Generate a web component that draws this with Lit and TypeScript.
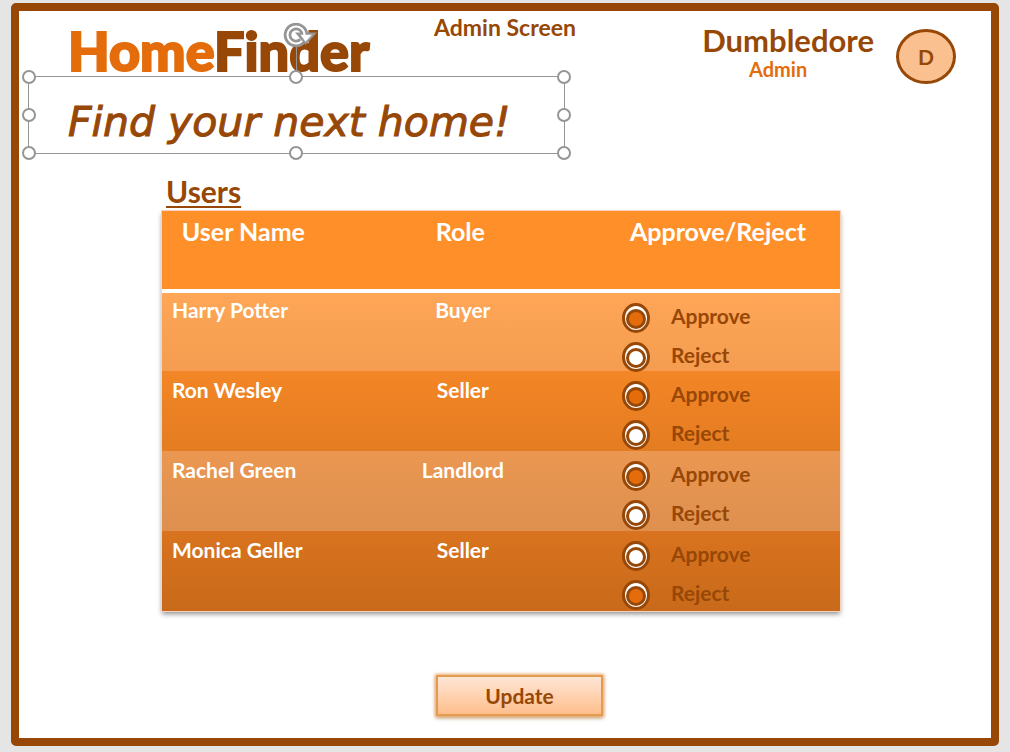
import { LitElement, html, css } from "lit";
import { customElement, property, state } from "lit/decorators.js";

type Decision = "approve" | "reject";

interface UserRow {
  name: string;
  role: string;
  decision: Decision;
}

@customElement("brand-tagline")
class BrandTagline extends LitElement {
  static styles = css`
    :host {
      display: block;
    }
    .box {
      position: relative;
      border: 1px solid #959595;
      padding: 23px 53px 9px 39px;
      color: #974706;
      font: italic 41px/44px "DejaVu Sans", sans-serif;
      -webkit-text-stroke: 1px #974706;
      white-space: nowrap;
    }
    .text {
      margin: 0;
    }
    .handle {
      position: absolute;
      box-sizing: border-box;
      width: 14px;
      height: 14px;
      margin: -7px;
      border: 2px solid #959595;
      border-radius: 50%;
      background: #fff;
    }
    .top { top: 0; }
    .middle { top: 50%; }
    .bottom { top: 100%; }
    .left { left: 0; }
    .center { left: 50%; }
    .right { left: 100%; }
    .rotate {
      position: absolute;
      left: 50%;
      bottom: 100%;
      width: 42px;
      height: 56px;
      margin-left: -20px;
    }
  `;

  render() {
    const handles = [
      "top left", "top center", "top right",
      "middle left", "middle right",
      "bottom left", "bottom center", "bottom right",
    ];
    return html`
      <div class="box">
        <p class="text">Find your next home!</p>
        <svg class="rotate" viewBox="0 0 42 56" aria-hidden="true">
          <path d="M20.5 26V56" stroke="#959595" />
          <circle cx="20" cy="14" r="6" fill="#fff" />
          <path d="M26 20A8.5 8.5 0 1 1 28.5 13.5" fill="none" stroke="#959595" stroke-width="7.5" />
          <path d="M19 11.5H41L29.5 24Z" fill="#959595" />
          <path d="M24.5 13.8H36L29.5 20.8Z" fill="#fff" />
          <path d="M26 20A8.5 8.5 0 1 1 28.5 14.5" fill="none" stroke="#fff" stroke-width="2" />
        </svg>
        ${handles.map((h) => html`<span class="handle ${h}"></span>`)}
      </div>
    `;
  }
}

@customElement("user-table")
class UserTable extends LitElement {
  @property({ attribute: false }) users: UserRow[] = [];

  static styles = css`
    :host {
      display: block;
    }
    .table {
      width: 100%;
      table-layout: fixed;
      border-collapse: collapse;
      box-shadow: 0 0 0 1px #f3d3c0, 0 3px 5px rgba(0, 0, 0, 0.45);
      color: #fff;
      font-size: 21px;
      line-height: 26px;
      font-weight: 700;
    }
    .name-col { width: 24%; }
    .role-col { width: 40%; }
    .decision-col { width: 36%; }
    .head th {
      height: 66px;
      padding: 6px 0;
      border-bottom: 4px solid #fff;
      background: #ff9029;
      font-size: 25px;
      line-height: 28px;
      vertical-align: top;
    }
    .row td {
      padding: 6px 0 0;
      vertical-align: top;
    }
    .row:first-child td {
      padding-top: 4px;
    }
    .row .name {
      padding-left: 10px;
      white-space: nowrap;
    }
    .row .role {
      padding-left: 5px;
      text-align: center;
    }
    .row .decision,
    .row:first-child .decision {
      padding: 5px 0 0 26px;
    }
    .row:nth-child(1) { background: linear-gradient(#ffa657, #f49d50); }
    .row:nth-child(2) { background: linear-gradient(#f38626, #e47c21); }
    .row:nth-child(3) { background: linear-gradient(#ea9751, #de904f); }
    .row:nth-child(4) { background: linear-gradient(#d9731f, #c86a1a); }
    .options {
      height: 75px;
    }
    .row:first-child .options {
      height: 73px;
    }
    .option {
      display: flex;
      align-items: center;
      gap: 21px;
      height: 39px;
      color: #974706;
    }
    .label {
      padding-bottom: 4px;
    }
    .radio {
      appearance: none;
      display: grid;
      align-items: end;
      justify-items: center;
      box-sizing: border-box;
      width: 28px;
      height: 30px;
      margin: 0;
      padding-bottom: 1px;
      border: 3px solid #974706;
      border-radius: 50%;
      background: #fff;
    }
    .radio::before {
      content: "";
      box-sizing: border-box;
      width: 20px;
      height: 20px;
      border: 3px solid #974706;
      border-radius: 50%;
      background: #fff;
    }
    .radio:checked::before {
      background: #e46c0a;
    }
  `;

  private option(index: number, user: UserRow, value: Decision, label: string) {
    return html`
      <label class="option">
        <input class="radio" type="radio" name="decision-${index}" value=${value}
          ?checked=${user.decision === value} />
        <span class="label">${label}</span>
      </label>
    `;
  }

  render() {
    return html`
      <table class="table">
        <colgroup>
          <col class="name-col" />
          <col class="role-col" />
          <col class="decision-col" />
        </colgroup>
        <thead class="head">
          <tr>
            <th scope="col">User Name</th>
            <th scope="col">Role</th>
            <th scope="col">Approve/Reject</th>
          </tr>
        </thead>
        <tbody>
          ${this.users.map((user, i) => html`
            <tr class="row">
              <td class="name">${user.name}</td>
              <td class="role">${user.role}</td>
              <td class="decision">
                <div class="options">
                  ${this.option(i, user, "approve", "Approve")}
                  ${this.option(i, user, "reject", "Reject")}
                </div>
              </td>
            </tr>
          `)}
        </tbody>
      </table>
    `;
  }
}

@customElement("app-root")
class AppRoot extends LitElement {
  @state() private users: UserRow[] = [
    { name: "Harry Potter", role: "Buyer", decision: "approve" },
    { name: "Ron Wesley", role: "Seller", decision: "approve" },
    { name: "Rachel Green", role: "Landlord", decision: "approve" },
    { name: "Monica Geller", role: "Seller", decision: "reject" },
  ];

  static styles = css`
    :host {
      display: flex;
      box-sizing: border-box;
      min-height: 100vh;
      padding: 3px 11px 6px;
      background: #e5e5e5;
      color: #974706;
      font-family: Lato, Carlito, sans-serif;
      font-weight: 700;
    }
    .slide {
      flex: 1;
      border: 8px solid #974706;
      border-radius: 5px;
      background: #fff;
    }
    .header {
      display: grid;
      grid-template-columns: 1fr auto 1fr;
      grid-template-rows: 65px auto;
      padding: 0 9px;
    }
    .logo {
      margin: 0;
      padding: 11px 0 0 40px;
      font-size: 54px;
      line-height: 58px;
      font-weight: 900;
      -webkit-text-stroke: 2px currentColor;
    }
    .logo-accent {
      color: #e46c0a;
      -webkit-text-stroke: 2px #e46c0a;
    }
    .screen-title {
      margin: 0;
      padding-top: 2px;
      font-size: 23px;
      line-height: 28px;
    }
    .tagline {
      grid-row: 2;
      grid-column: 1 / 3;
      justify-self: start;
    }
    .user {
      grid-row: 1 / 3;
      grid-column: 3;
      display: flex;
      justify-content: flex-end;
      align-items: flex-start;
      gap: 22px;
      padding: 12px 26px 0 0;
    }
    .user-text {
      text-align: center;
    }
    .user-name {
      font-size: 31px;
      line-height: 34px;
    }
    .user-role {
      padding-right: 20px;
      color: #e46c0a;
      font-size: 20px;
      line-height: 24px;
    }
    .avatar {
      display: grid;
      place-items: center;
      box-sizing: border-box;
      width: 60px;
      height: 55px;
      margin-top: 6px;
      border: 3px solid #974706;
      border-radius: 50%;
      background: #fac090;
      font-size: 21px;
    }
    .content {
      padding: 20px 151px 0 143px;
    }
    .heading {
      margin: 0;
      padding: 0 4px 3px;
      font-size: 30px;
      line-height: 34px;
      text-decoration: underline 2px;
      text-underline-offset: 3px;
      text-decoration-skip-ink: none;
    }
    .actions {
      display: flex;
      justify-content: center;
      padding: 64px 0 20px 37px;
    }
    .update {
      width: 167px;
      height: 41px;
      padding: 0;
      border: 2px solid #e39a51;
      background: linear-gradient(#fee6d6, #ffbe8c);
      box-shadow: 0 0 3px 1px #f0b070, 0 2px 4px rgba(120, 60, 0, 0.5);
      color: #974706;
      font: 700 21px/26px Lato, Carlito, sans-serif;
    }
  `;

  render() {
    return html`
      <main class="slide">
        <header class="header">
          <h1 class="logo"><span class="logo-accent">Home</span>Finder</h1>
          <h2 class="screen-title">Admin Screen</h2>
          <brand-tagline class="tagline"></brand-tagline>
          <div class="user">
            <div class="user-text">
              <div class="user-name">Dumbledore</div>
              <div class="user-role">Admin</div>
            </div>
            <div class="avatar">D</div>
          </div>
        </header>
        <section class="content">
          <h2 class="heading">Users</h2>
          <user-table .users=${this.users}></user-table>
          <div class="actions">
            <button class="update" type="button">Update</button>
          </div>
        </section>
      </main>
    `;
  }
}
